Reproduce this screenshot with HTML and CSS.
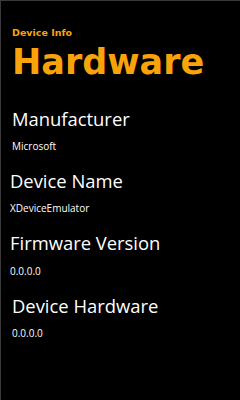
FILE: index.html
```html
<!DOCTYPE html>
<html lang="en">
<head>
    <meta charset="UTF-8">
    <meta name="viewport" content="width=device-width, initial-scale=1.0">
    <title>Device Info</title>
    <link rel="stylesheet" href="styles.css">
</head>
<body>
    <div class="page">
        <div class="app-title">Device Info</div>
        <div class="page-title">Hardware</div>

        <div class="field">
            <div class="label">Manufacturer</div>
            <div class="value">Microsoft</div>
        </div>
        <div class="field field-left">
            <div class="label">Device Name</div>
            <div class="value">XDeviceEmulator</div>
        </div>
        <div class="field field-left">
            <div class="label">Firmware Version</div>
            <div class="value">0.0.0.0</div>
        </div>
        <div class="field">
            <div class="label">Device Hardware</div>
            <div class="value">0.0.0.0</div>
        </div>
    </div>
</body>
</html>
```

FILE: styles.css
```css
* {
    margin: 0;
    padding: 0;
    box-sizing: border-box;
}

html, body {
    height: 100%;
}

body {
    background: #000;
    color: #fff;
    border-top: 1px solid #3a3a3a;
    border-left: 1px solid #3a3a3a;
    font-family: 'Open Sans', sans-serif;
}

.page {
    padding: 27px 0 0 11px;
}

.app-title {
    font-family: 'DejaVu Sans', sans-serif;
    font-weight: bold;
    font-size: 9.5px;
    line-height: 1;
    color: #f9a30a;
}

.page-title {
    font-family: 'DejaVu Sans', sans-serif;
    font-weight: bold;
    font-size: 35px;
    line-height: 1;
    color: #f9a30a;
    margin-top: 7px;
}

.field {
    margin-top: 21px;
}

.page-title + .field {
    margin-top: 30px;
}

.field-left {
    margin-left: -2px;
}

.label {
    font-size: 18.4px;
    line-height: 1;
}

.value {
    font-size: 10px;
    line-height: 1;
    margin-top: 13px;
}
```
